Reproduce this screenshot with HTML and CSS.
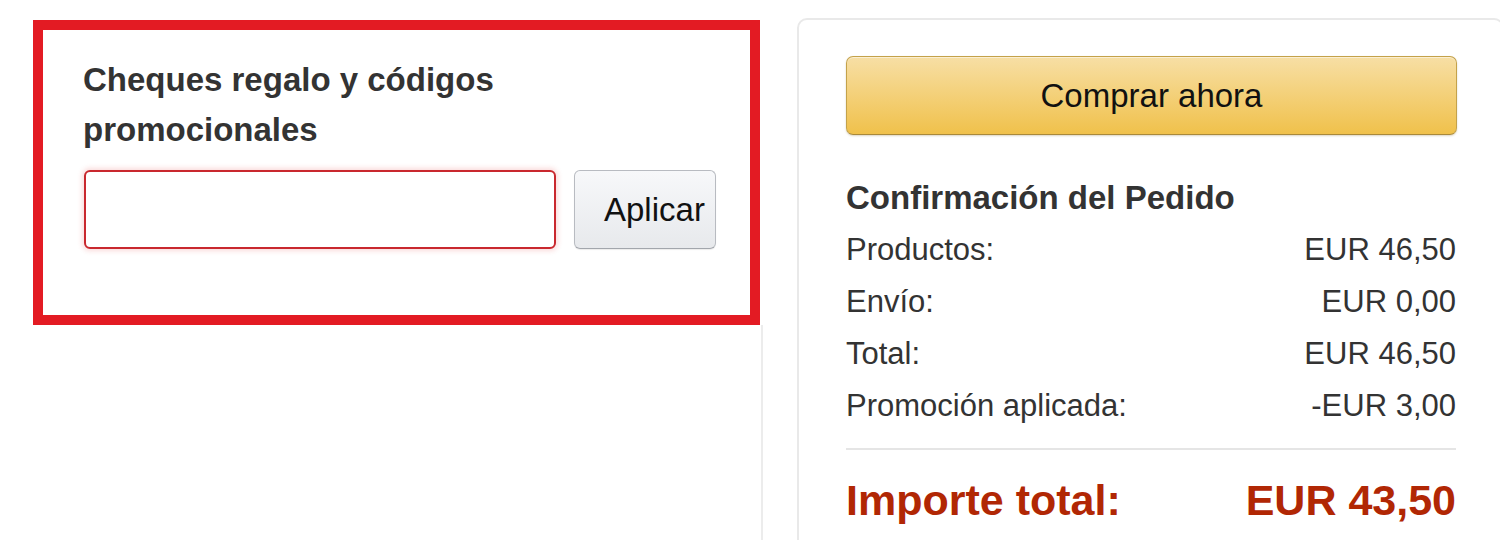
FILE: index.html
```html
<!DOCTYPE html>
<html lang="es">
<head>
<meta charset="utf-8">
<title>Pedido</title>
<link rel="stylesheet" href="styles.css">
</head>
<body>
<div class="page">
  <div class="left-col">
    <div class="promo-box">
      <h3 class="promo-title">Cheques regalo y códigos promocionales</h3>
      <div class="promo-row">
        <input class="promo-input" type="text" aria-label="Código">
        <button class="promo-btn" type="button">Aplicar</button>
      </div>
    </div>
    <div class="left-rest"></div>
  </div>
  <div class="summary">
    <button class="buy-btn" type="button">Comprar ahora</button>
    <h3 class="summary-title">Confirmación del Pedido</h3>
    <div class="line"><span>Productos:</span><span>EUR 46,50</span></div>
    <div class="line"><span>Envío:</span><span>EUR 0,00</span></div>
    <div class="line"><span>Total:</span><span>EUR 46,50</span></div>
    <div class="line"><span>Promoción aplicada:</span><span>-EUR 3,00</span></div>
    <div class="divider"></div>
    <div class="grand"><span>Importe total:</span><span>EUR 43,50</span></div>
  </div>
</div>
</body>
</html>
```

FILE: styles.css
```css
html, body {
  margin: 0;
  padding: 0;
  background: #fff;
}
body {
  font-family: "Liberation Sans", Arial, sans-serif;
  color: #333;
  overflow: hidden;
}
.page {
  display: flex;
  height: 540px;
  overflow: hidden;
}
.left-col {
  display: flex;
  flex-direction: column;
  width: 730px;
  margin-left: 33px;
  padding-top: 20px;
  flex-shrink: 0;
}
.promo-box {
  box-sizing: border-box;
  width: 727px;
  height: 305px;
  border: 10px solid #e31b23;
  padding: 25px 0 0 40px;
  background: #fff;
}
.promo-title {
  margin: 0;
  max-width: 460px;
  font-size: 33px;
  line-height: 50px;
  font-weight: bold;
  color: #333;
}
.promo-row {
  display: flex;
  gap: 18px;
  margin-top: 15px;
}
.promo-input {
  box-sizing: border-box;
  width: 472px;
  height: 79px;
  margin: 0 0 0 1px;
  border: 2px solid #c9282e;
  border-radius: 6px;
  box-shadow: 0 0 5px 2px rgba(230, 60, 60, 0.18);
  background: #fff;
  outline: none;
}
.promo-btn {
  box-sizing: border-box;
  width: 142px;
  height: 79px;
  margin: 0;
  padding: 0 0 0 29px;
  text-align: left;
  font-family: "Liberation Sans", Arial, sans-serif;
  font-size: 33px;
  color: #111;
  background: linear-gradient(to bottom, #f7f8fa, #e7e9ec);
  border: 1px solid #b8bbc1;
  border-bottom-color: #a2a6ac;
  border-radius: 6px;
  box-shadow: 0 1px 1px rgba(0, 0, 0, 0.08);
  overflow: hidden;
  white-space: nowrap;
}
.left-rest {
  flex: 1;
  border-right: 2px solid #ececec;
}
.summary {
  box-sizing: border-box;
  flex-shrink: 0;
  width: 707px;
  min-height: 700px;
  margin-left: 34px;
  margin-top: 18px;
  padding: 36px 47px 0 47px;
  border: 2px solid #e9e9e9;
  border-radius: 10px;
}
.buy-btn {
  display: block;
  box-sizing: border-box;
  width: 611px;
  height: 79px;
  margin: 0;
  padding: 0;
  font-family: "Liberation Sans", Arial, sans-serif;
  font-size: 33px;
  color: #111;
  background: linear-gradient(to bottom, #f7dfa5, #f0c14b);
  border: 1px solid #c4a24a;
  border-bottom-color: #a9893a;
  border-radius: 7px;
  box-shadow: inset 0 1px 0 rgba(255, 255, 255, 0.5), 0 1px 2px rgba(120, 90, 20, 0.25);
}
.summary-title {
  margin: 41px 0 4px 0;
  font-size: 33px;
  line-height: 44px;
  font-weight: bold;
  color: #333;
}
.line {
  display: flex;
  justify-content: space-between;
  width: 610px;
  font-size: 31px;
  line-height: 52px;
  color: #333;
}
.divider {
  width: 610px;
  height: 2px;
  background: #e5e5e5;
  margin: 16px 0 24px 0;
}
.grand {
  display: flex;
  justify-content: space-between;
  width: 610px;
  font-size: 43px;
  line-height: 52px;
  font-weight: bold;
  color: #b12704;
}
```
